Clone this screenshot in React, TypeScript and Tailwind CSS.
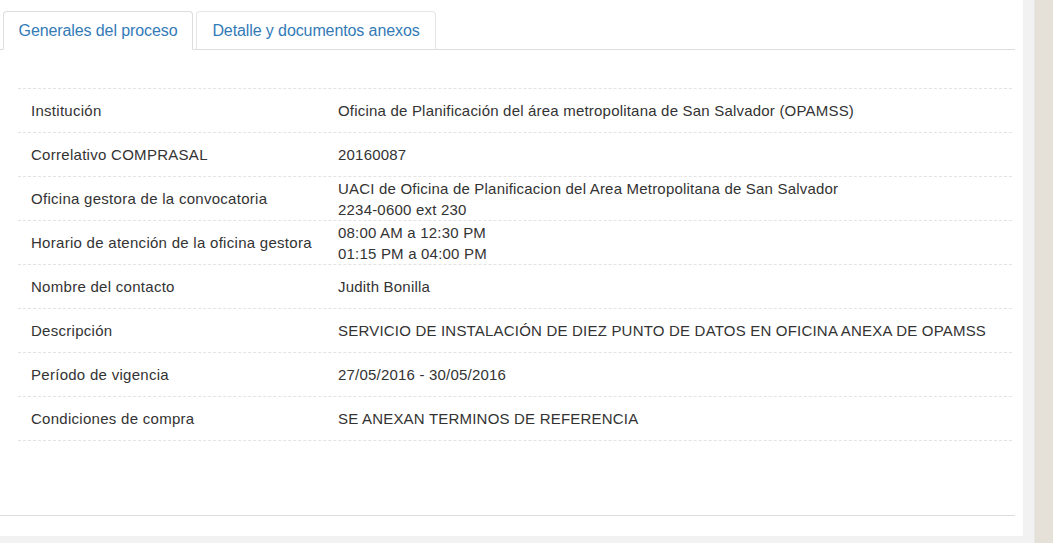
import React from "react";

const rows: { label: string; value: string[] }[] = [
  { label: "Institución", value: ["Oficina de Planificación del área metropolitana de San Salvador (OPAMSS)"] },
  { label: "Correlativo COMPRASAL", value: ["20160087"] },
  { label: "Oficina gestora de la convocatoria", value: ["UACI de Oficina de Planificacion del Area Metropolitana de San Salvador", "2234-0600 ext 230"] },
  { label: "Horario de atención de la oficina gestora", value: ["08:00 AM a 12:30 PM", "01:15 PM a 04:00 PM"] },
  { label: "Nombre del contacto", value: ["Judith Bonilla"] },
  { label: "Descripción", value: ["SERVICIO DE INSTALACIÓN DE DIEZ PUNTO DE DATOS EN OFICINA ANEXA DE OPAMSS"] },
  { label: "Período de vigencia", value: ["27/05/2016 - 30/05/2016"] },
  { label: "Condiciones de compra", value: ["SE ANEXAN TERMINOS DE REFERENCIA"] },
];

export default function App() {
  return (
    <div
      className="flex w-[1053px] h-[543px] overflow-hidden bg-[#e5e1d8]"
      style={{ fontFamily: '"Liberation Sans", Arial, sans-serif' }}
    >
      <div className="flex flex-col w-[1035px] bg-[#f2f2f2] border-r border-[#e8e8e8]">
        <div className="flex flex-col w-[1023px] h-[536px] bg-white">
          <div className="flex items-end h-[50px] w-[1015px] border-b border-[#dddddd] pl-[3px] gap-[3px]">
            <div className="w-[190px] h-[39px] flex items-center justify-center bg-white border border-[#dddddd] border-b-transparent rounded-t-[4px] text-[#337ab7] text-[16px] tracking-[-0.1px] -mb-px">
              Generales del proceso
            </div>
            <div className="w-[240px] h-[38px] flex items-center justify-center border border-[#e6e6e6] border-b-0 rounded-t-[4px] text-[#337ab7] text-[16px] tracking-[-0.1px]">
              Detalle y documentos anexos
            </div>
          </div>
          <div className="pt-[38px] pl-[18px] w-[1012px]">
            {rows.map((r) => (
              <div
                key={r.label}
                className="flex items-center h-[44px] border-t border-dashed border-[#e3e3e3] text-[#333333] text-[15px] leading-[21px] tracking-[0.2px]"
              >
                <div className="w-[320px] pl-[13px] tracking-[0.28px]">{r.label}</div>
                <div className="flex flex-col">
                  {r.value.map((v) => (
                    <div key={v}>{v}</div>
                  ))}
                </div>
              </div>
            ))}
            <div className="border-t border-dashed border-[#e3e3e3]" />
          </div>
          <div className="mt-auto mb-[20px] w-[1015px] border-b border-[#dddddd]" />
        </div>
      </div>
    </div>
  );
}
